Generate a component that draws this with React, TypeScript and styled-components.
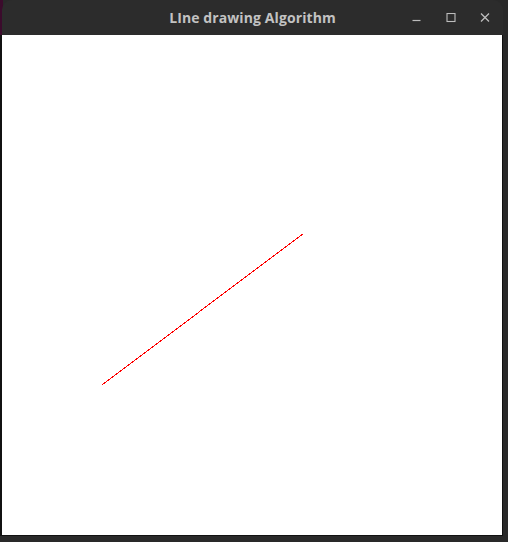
import React from "react";
import styled, { createGlobalStyle } from "styled-components";

const Global = createGlobalStyle`
  html, body { margin: 0; padding: 0; background: #292929; }
  #root { width: 508px; height: 542px; }
`;

const Page = styled.div`
  width: 508px;
  height: 542px;
  background: linear-gradient(#3b0b2c, #3b0b2c) 0 0 / 3px 35px no-repeat, #292929;
  overflow: hidden;
`;

const Window = styled.div`
  display: flex;
  flex-direction: column;
  width: 503px;
`;

const TitleBar = styled.div`
  display: grid;
  grid-template-columns: 1fr auto 1fr;
  align-items: center;
  height: 35px;
  margin-left: 2px;
  width: 501px;
  background: #2c2c2c;
  border-radius: 10px 10px 0 0;
`;

const Title = styled.div`
  grid-column: 2;
  font-family: "Open Sans", "DejaVu Sans", sans-serif;
  font-weight: 700;
  font-size: 14px;
  color: #c2c2c2;
  letter-spacing: 0.1px;
  white-space: nowrap;
`;

const Controls = styled.div`
  grid-column: 3;
  justify-self: end;
  display: flex;
  padding-right: 1px;
  height: 35px;
`;

const CtrlButton = styled.div`
  width: 34px;
  height: 35px;
  display: flex;
  align-items: center;
  justify-content: center;
  color: #bdbdbd;
`;

const Canvas = styled.div`
  position: relative;
  width: 500px;
  height: 500px;
  background: #ffffff;
  border-left: 2px solid #111111;
  border-right: 1px solid #111111;
  border-bottom: 1px solid #111111;
`;

const Drawing = styled.svg`
  display: block;
`;

export default function App() {
  return (
    <>
      <Global />
      <Page>
        <Window>
          <TitleBar>
            <Title>LIne drawing Algorithm</Title>
            <Controls>
              <CtrlButton>
                <svg width="10" height="10" viewBox="0 0 10 10">
                  <line x1="0.5" y1="7.5" x2="8.5" y2="7.5" stroke="currentColor" strokeWidth="1.2" />
                </svg>
              </CtrlButton>
              <CtrlButton>
                <svg width="10" height="10" viewBox="0 0 10 10">
                  <rect x="1" y="0.5" width="8" height="8" fill="none" stroke="currentColor" strokeWidth="1.1" />
                </svg>
              </CtrlButton>
              <CtrlButton>
                <svg width="10" height="10" viewBox="0 0 10 10">
                  <path d="M1 0.5 L9 8.5 M9 0.5 L1 8.5" stroke="currentColor" strokeWidth="1.3" />
                </svg>
              </CtrlButton>
            </Controls>
          </TitleBar>
          <Canvas>
            <Drawing width="500" height="500" viewBox="0 0 500 500">
              <line x1="100.5" y1="349.5" x2="301" y2="198.9" stroke="#ff0000" strokeWidth="1" shapeRendering="crispEdges" />
            </Drawing>
          </Canvas>
        </Window>
      </Page>
    </>
  );
}
